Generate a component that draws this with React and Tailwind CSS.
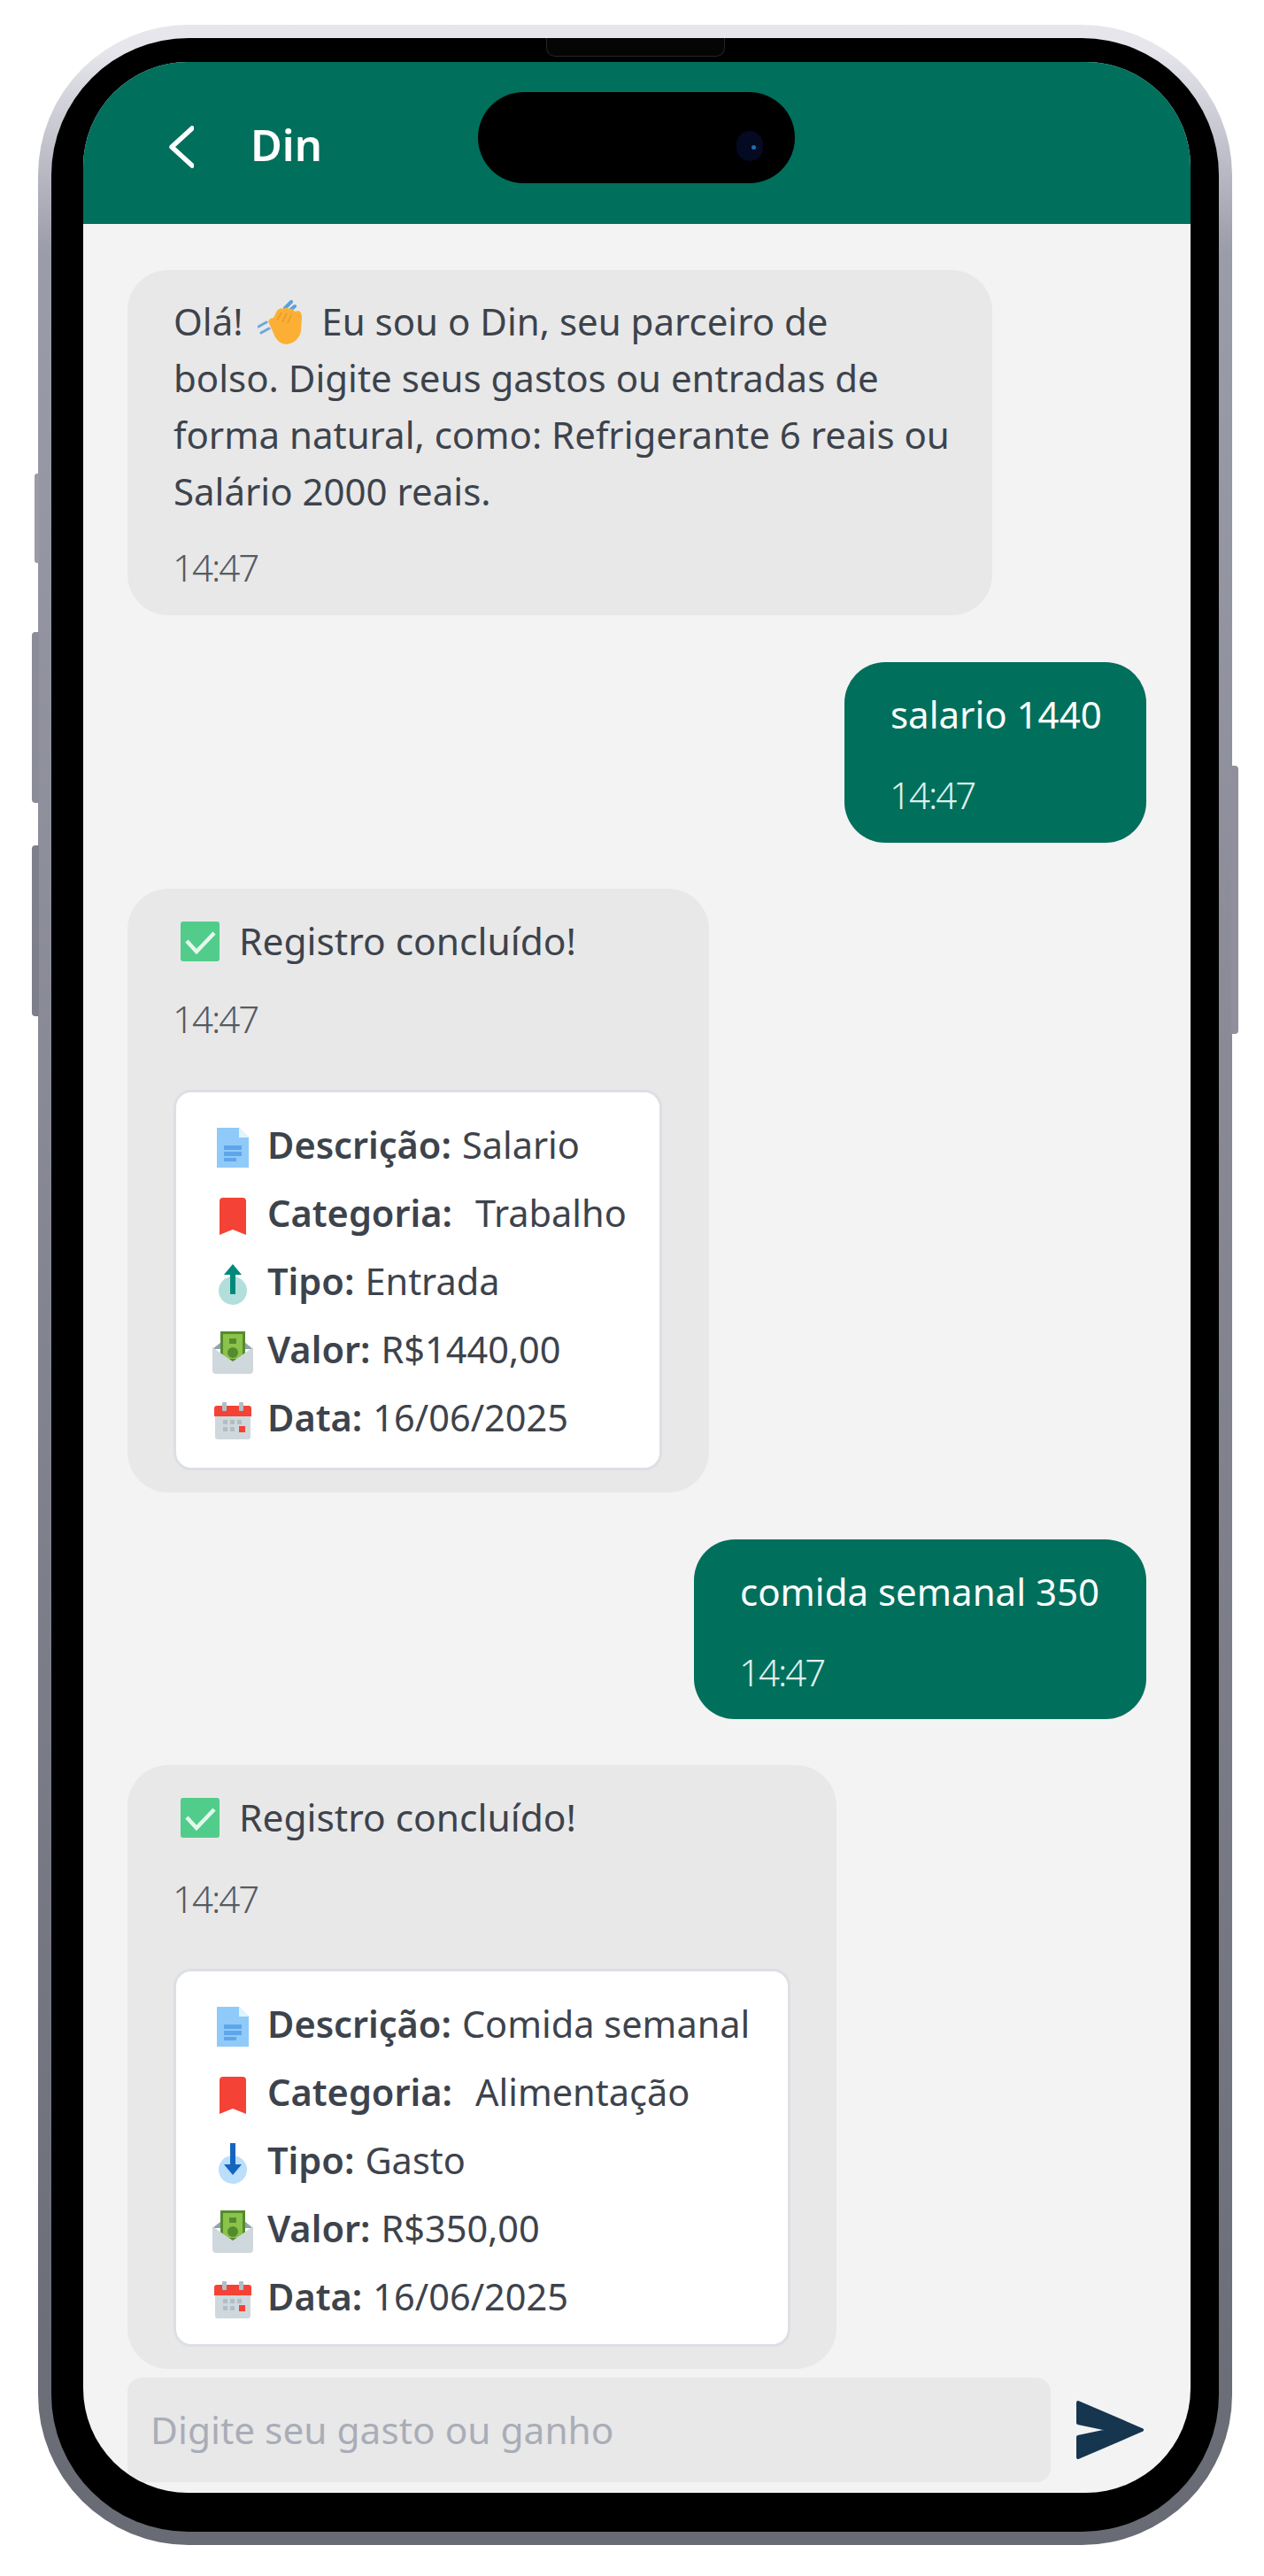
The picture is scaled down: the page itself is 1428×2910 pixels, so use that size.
import React from "react";

const FONT = "font-['Noto_Sans','Open_Sans',sans-serif]";

function Wave() {
  return (
    <svg viewBox="0 0 50 50" className="inline-block w-[50px] h-[50px] align-[-10px] ml-[6px] mr-[11px]">
      <path d="M1 30l9-5M4 37l9-5" stroke="#6aa9dc" strokeWidth="3" strokeLinecap="round" fill="none" />
      <path d="M31 9l7-7M36 12l6-5" stroke="#5aa0dc" strokeWidth="4" strokeLinecap="round" fill="none" />
      <path d="M12 24Q14 20 18 20L22 12Q25 8 29 10Q32 7 36 10Q40 9 42 13L46 12Q50 13 50 20L49 35Q46 48 33 50Q25 50 20 42Z" fill="#fbb035" />
      <path d="M22 23l5-9M28 25l5-10M34 26l4-9" stroke="#e8992a" strokeWidth="1.5" fill="none" />
    </svg>
  );
}

function Check() {
  return (
    <svg viewBox="0 0 44 45" className="w-[44px] h-[45px]">
      <rect x="0" y="0" width="44" height="45" rx="3" fill="#52cc8b" />
      <path d="M7 22l11 12L38 13" stroke="#e6f7ec" strokeWidth="4.5" fill="none" />
    </svg>
  );
}

function Doc() {
  return (
    <svg viewBox="0 0 36 45" className="w-[36px] h-[45px]">
      <path d="M0 0h25l11 11v34H0z" fill="#90caf9" />
      <path d="M25 0l11 11H25z" fill="#e1f5fe" />
      <path d="M8 20h20v5H8zM8 27h20v5H8zM8 34h14v4H8z" fill="#5ea6ea" />
    </svg>
  );
}

function Bookmark() {
  return (
    <svg viewBox="0 0 30 42" className="w-[30px] h-[42px]">
      <path d="M0 4q0-4 4-4h22q4 0 4 4v38l-15-6-15 6z" fill="#f44336" />
    </svg>
  );
}

function Arrow({ down }) {
  const c = down ? "#bbdefb" : "#b2dfdb";
  const a = down ? "#1565c0" : "#00897b";
  return (
    <svg viewBox="0 0 32 46" className="w-[32px] h-[46px]">
      <circle cx="16" cy="30" r="16" fill={c} />
      {down ? (
        <path d="M13 0h6v24h7L16 36 6 24h7z" fill={a} />
      ) : (
        <path d="M16 0l10 12h-7v22h-6V12H6z" fill={a} />
      )}
    </svg>
  );
}

function Money() {
  return (
    <svg viewBox="0 0 46 48" className="w-[46px] h-[48px]">
      <path d="M0 20L10 12h26l10 8z" fill="#90a4ae" />
      <rect x="9" y="0" width="28" height="34" fill="#558b2f" />
      <rect x="12" y="3" width="22" height="28" fill="#8bc34a" />
      <circle cx="23" cy="24" r="6" fill="#558b2f" />
      <path d="M19 8h8v6h-8z" fill="#558b2f" />
      <path d="M0 18l23 16 23-16v26q0 4-4 4H4q-4 0-4-4z" fill="#cfd8dc" />
    </svg>
  );
}

function Calendar() {
  return (
    <svg viewBox="0 0 42 42" className="w-[42px] h-[42px]">
      <rect x="1" y="4" width="40" height="38" rx="3" fill="#cfd8dc" />
      <path d="M0 16V7q0-3 3-3h36q3 0 3 3v9z" fill="#f44336" />
      <rect x="9" y="0" width="5" height="10" rx="1" fill="#b0bec5" />
      <rect x="28" y="0" width="5" height="10" rx="1" fill="#b0bec5" />
      <path d="M10 20h5v5h-5zM18 20h5v5h-5zM26 20h5v5h-5zM10 28h5v5h-5zM18 28h5v5h-5z" fill="#b0bec5" />
      <rect x="28" y="27" width="7" height="7" fill="#f44336" />
    </svg>
  );
}

function Row({ icon, label, value, gap }) {
  return (
    <div className="flex items-center h-[77px]">
      <div className="w-[46px] flex justify-center mr-[16px]">{icon}</div>
      <div className="text-[41.5px] leading-none whitespace-nowrap text-[#3d434c] -mt-[6px]">
        <span className="font-semibold">{label}</span>
        <span className={gap ? "ml-[26px]" : "ml-[12px]"}>{value}</span>
      </div>
    </div>
  );
}

function Time({ light }) {
  return (
    <div className={`-ml-[1px] text-[42px] leading-[64px] font-light tracking-[-2px] ${light ? "text-[#dff0ea]" : "text-[#565b63]"}`}>
      14:47
    </div>
  );
}

function Outgoing({ text, width, height }) {
  return (
    <div className={`self-end bg-[#006f5c] rounded-[46px] pt-[27px] px-[52px] text-white ${height} ${width}`}>
      <div className="text-[42px] leading-[64px] whitespace-nowrap">{text}</div>
      <div className="mt-[27px]"><Time light /></div>
    </div>
  );
}

function Record({ width, cardWidth, cardHeight, desc, cat, tipo, valor, down, timeGap, cardGap }) {
  return (
    <div className={`bg-[#e8e8e8] rounded-[46px] h-[682px] pt-[27px] pl-[52px] shrink-0 ${width}`}>
      <div className="flex items-center h-[64px] text-[42.5px] text-[#3d434c] whitespace-nowrap">
        <div className="ml-[8px] mr-[22px]"><Check /></div>
        Registro concluído!
      </div>
      <div className={timeGap}><Time /></div>
      <div className={`bg-white border-[3px] border-[#dcdfe4] rounded-[20px] pt-[24px] pl-[41px] ${cardHeight} ${cardGap} ${cardWidth}`}>
        <Row icon={<Doc />} label="Descrição:" value={desc} />
        <Row icon={<Bookmark />} label="Categoria:" value={cat} gap />
        <Row icon={<Arrow down={down} />} label="Tipo:" value={tipo} />
        <Row icon={<Money />} label="Valor:" value={valor} />
        <Row icon={<Calendar />} label="Data:" value="16/06/2025" />
      </div>
    </div>
  );
}

export default function App() {
  return (
    <div className={`w-[1428px] h-[2910px] bg-white pt-[28px] pl-[43px] ${FONT}`}>
      <div className="relative w-[1349px] h-[2847px] rounded-[170px] bg-gradient-to-b from-[#e6e6ec] from-[1%] via-[#9b9ca9] via-[9%] to-[#686a74] p-[15px]">
        {/* side buttons */}
        <div className="absolute left-[-4px] top-[507px] w-[5px] h-[101px] rounded-l-[3px] bg-[#9a9ba6]" />
        <div className="absolute left-[-7px] top-[686px] w-[8px] h-[193px] rounded-l-[4px] bg-[#8b8c98]" />
        <div className="absolute left-[-7px] top-[927px] w-[8px] h-[193px] rounded-l-[4px] bg-[#7e7f8b]" />
        <div className="absolute right-[-7px] top-[837px] w-[8px] h-[303px] rounded-r-[4px] bg-[#8f909c]" />

        <div className="relative w-full h-full bg-black rounded-[155px] pt-[27px] pl-[36px] pr-[32px] pb-[44px]">
          {/* speaker */}
          <div className="absolute left-[559px] top-0 w-[202px] h-[21px] rounded-b-[10px] border border-t-0 border-[#26262a] bg-[#050505]" />
          <div className="w-full h-full rounded-[118px] overflow-hidden bg-[#f3f3f3] flex flex-col relative">
            {/* island */}
            <div className="absolute left-[446px] top-[34px] w-[358px] h-[103px] rounded-full bg-black">
              <div className="absolute left-[292px] top-[44px] w-[30px] h-[34px] rounded-full bg-[#040a22]">
                <div className="absolute left-[17px] top-[16px] w-[5px] h-[5px] rounded-full bg-[#1c6fb0]" />
              </div>
            </div>

            <header className="h-[183px] shrink-0 bg-[#006f5c] flex items-center pl-[97px] pb-[4px] text-white">
              <svg viewBox="0 0 28 48" className="w-[28px] h-[48px] mt-[12px]" fill="none" stroke="#fff" strokeWidth="5.5" strokeLinecap="round" strokeLinejoin="round">
                <path d="M26 3L3 24l23 21" />
              </svg>
              <div className="ml-[64px] mt-[8px] text-[49px] font-semibold leading-none">Din</div>
            </header>

            <main className="flex-1 min-h-0 overflow-hidden px-[50px] pt-[52px] flex flex-col gap-[52.5px]">
              <div className="w-[977px] h-[390px] shrink-0 bg-[#e8e8e8] rounded-[46px] pt-[26px] pl-[52px] text-[#3d434c]">
                <div className="text-[42px] leading-[64px] whitespace-nowrap">
                  Olá! <Wave /> Eu sou o Din, seu parceiro de<br />
                  bolso. Digite seus gastos ou entradas de<br />
                  forma natural, como: Refrigerante 6 reais ou<br />
                  Salário 2000 reais.
                </div>
                <div className="mt-[22px]"><Time /></div>
              </div>

              <Outgoing text="salario 1440" width="w-[341px] shrink-0" height="h-[204px]" />
              <Record width="w-[657px]" cardWidth="w-[552px]" cardHeight="h-[430px]" desc="Salario" cat="Trabalho" tipo="Entrada" valor="R$1440,00" timeGap="mt-[24px]" cardGap="mt-[48px]" />
              <Outgoing text="comida semanal 350" width="w-[511px] shrink-0" height="h-[203px]" />
              <Record width="w-[801px]" cardWidth="w-[697px]" cardHeight="h-[427px]" desc="Comida semanal" cat="Alimentação" tipo="Gasto" valor="R$350,00" down timeGap="mt-[28px]" cardGap="mt-[47px]" />
            </main>

            <div className="shrink-0 h-[118px] mb-[12px] pl-[50px] flex items-center">
              <div className="w-[1043px] h-full rounded-[16px] bg-[#e8e8e8] flex items-center pl-[26px] text-[42.4px] text-[#a9adb8] whitespace-nowrap">
                Digite seu gasto ou ganho
              </div>
              <svg viewBox="0 0 76 66" className="w-[76px] h-[66px] ml-[29px]" fill="#16354f" stroke="#16354f" strokeWidth="4" strokeLinejoin="round">
                <path d="M2 2L74 33 2 64V41L40 33 2 25z" />
              </svg>
            </div>
          </div>
        </div>
      </div>
    </div>
  );
}
